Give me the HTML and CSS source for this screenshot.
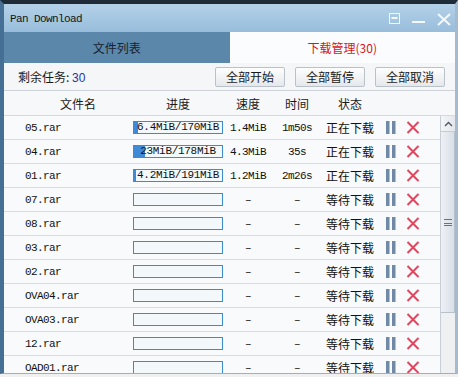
FILE: index.html
```html
<!DOCTYPE html>
<html lang="zh">
<head>
<meta charset="utf-8">
<title>Pan Download</title>
<link rel="stylesheet" href="styles.css">
</head>
<body>
<div class="window">
  <div class="titlebar">
    <span class="title">Pan Download</span>
    <div class="controls">
      <svg class="ctl-menu" width="11" height="11" viewBox="0 0 11 11"><rect x="0.5" y="0.5" width="10" height="10" fill="none" stroke="#f4f8fc" stroke-width="1"/><rect x="2.5" y="4" width="6" height="2" fill="#f4f8fc"/></svg>
      <svg class="ctl-min" width="13" height="12" viewBox="0 0 13 12"><rect x="0" y="8" width="13" height="2" fill="#f4f8fc"/></svg>
      <svg class="ctl-close" width="14" height="13" viewBox="0 0 14 13"><path d="M1 1 L13 12 M13 1 L1 12" stroke="#f4f8fc" stroke-width="2"/></svg>
    </div>
  </div>
  <div class="tabs">
    <div class="tab">文件列表</div>
    <div class="tab active">下载管理(30)</div>
  </div>
  <div class="toolbar">
    <span class="remain">剩余任务: <span class="num">30</span></span>
    <div class="btns">
      <button class="btn">全部开始</button>
      <button class="btn">全部暂停</button>
      <button class="btn">全部取消</button>
    </div>
  </div>
  <div class="thead">
    <div class="th th-name">文件名</div>
    <div class="th">进度</div>
    <div class="th">速度</div>
    <div class="th">时间</div>
    <div class="th">状态</div>
    <div class="th"></div>
  </div>
  <div class="list">
    <div class="rows">
      <div class="row"><div class="name">05.rar</div><div class="prog"><div class="bar"><div class="fill" style="width:4%"></div><span class="ptext">6.4MiB/170MiB</span></div></div><div class="c mono">1.4MiB</div><div class="c mono">1m50s</div><div class="c st">正在下载</div><div class="acts"><svg width="10" height="13" viewBox="0 0 10 13"><rect x="0" y="0" width="3.5" height="13" fill="#6f89a6"/><rect x="6" y="0" width="3.5" height="13" fill="#6f89a6"/></svg><svg width="14" height="13" viewBox="0 0 14 13"><path d="M1.5 1 L12.5 12 M12.5 1 L1.5 12" stroke="#e2465e" stroke-width="2"/></svg></div></div>
      <div class="row"><div class="name">04.rar</div><div class="prog"><div class="bar"><div class="fill" style="width:13%"></div><span class="ptext">23MiB/178MiB</span></div></div><div class="c mono">4.3MiB</div><div class="c mono">35s</div><div class="c st">正在下载</div><div class="acts"><svg width="10" height="13" viewBox="0 0 10 13"><rect x="0" y="0" width="3.5" height="13" fill="#6f89a6"/><rect x="6" y="0" width="3.5" height="13" fill="#6f89a6"/></svg><svg width="14" height="13" viewBox="0 0 14 13"><path d="M1.5 1 L12.5 12 M12.5 1 L1.5 12" stroke="#e2465e" stroke-width="2"/></svg></div></div>
      <div class="row"><div class="name">01.rar</div><div class="prog"><div class="bar"><div class="fill" style="width:2%"></div><span class="ptext">4.2MiB/191MiB</span></div></div><div class="c mono">1.2MiB</div><div class="c mono">2m26s</div><div class="c st">正在下载</div><div class="acts"><svg width="10" height="13" viewBox="0 0 10 13"><rect x="0" y="0" width="3.5" height="13" fill="#6f89a6"/><rect x="6" y="0" width="3.5" height="13" fill="#6f89a6"/></svg><svg width="14" height="13" viewBox="0 0 14 13"><path d="M1.5 1 L12.5 12 M12.5 1 L1.5 12" stroke="#e2465e" stroke-width="2"/></svg></div></div>
      <div class="row"><div class="name">07.rar</div><div class="prog"><div class="bar"></div></div><div class="c mono">–</div><div class="c mono">–</div><div class="c st">等待下载</div><div class="acts"><svg width="10" height="13" viewBox="0 0 10 13"><rect x="0" y="0" width="3.5" height="13" fill="#6f89a6"/><rect x="6" y="0" width="3.5" height="13" fill="#6f89a6"/></svg><svg width="14" height="13" viewBox="0 0 14 13"><path d="M1.5 1 L12.5 12 M12.5 1 L1.5 12" stroke="#e2465e" stroke-width="2"/></svg></div></div>
      <div class="row"><div class="name">08.rar</div><div class="prog"><div class="bar"></div></div><div class="c mono">–</div><div class="c mono">–</div><div class="c st">等待下载</div><div class="acts"><svg width="10" height="13" viewBox="0 0 10 13"><rect x="0" y="0" width="3.5" height="13" fill="#6f89a6"/><rect x="6" y="0" width="3.5" height="13" fill="#6f89a6"/></svg><svg width="14" height="13" viewBox="0 0 14 13"><path d="M1.5 1 L12.5 12 M12.5 1 L1.5 12" stroke="#e2465e" stroke-width="2"/></svg></div></div>
      <div class="row"><div class="name">03.rar</div><div class="prog"><div class="bar"></div></div><div class="c mono">–</div><div class="c mono">–</div><div class="c st">等待下载</div><div class="acts"><svg width="10" height="13" viewBox="0 0 10 13"><rect x="0" y="0" width="3.5" height="13" fill="#6f89a6"/><rect x="6" y="0" width="3.5" height="13" fill="#6f89a6"/></svg><svg width="14" height="13" viewBox="0 0 14 13"><path d="M1.5 1 L12.5 12 M12.5 1 L1.5 12" stroke="#e2465e" stroke-width="2"/></svg></div></div>
      <div class="row"><div class="name">02.rar</div><div class="prog"><div class="bar"></div></div><div class="c mono">–</div><div class="c mono">–</div><div class="c st">等待下载</div><div class="acts"><svg width="10" height="13" viewBox="0 0 10 13"><rect x="0" y="0" width="3.5" height="13" fill="#6f89a6"/><rect x="6" y="0" width="3.5" height="13" fill="#6f89a6"/></svg><svg width="14" height="13" viewBox="0 0 14 13"><path d="M1.5 1 L12.5 12 M12.5 1 L1.5 12" stroke="#e2465e" stroke-width="2"/></svg></div></div>
      <div class="row"><div class="name">OVA04.rar</div><div class="prog"><div class="bar"></div></div><div class="c mono">–</div><div class="c mono">–</div><div class="c st">等待下载</div><div class="acts"><svg width="10" height="13" viewBox="0 0 10 13"><rect x="0" y="0" width="3.5" height="13" fill="#6f89a6"/><rect x="6" y="0" width="3.5" height="13" fill="#6f89a6"/></svg><svg width="14" height="13" viewBox="0 0 14 13"><path d="M1.5 1 L12.5 12 M12.5 1 L1.5 12" stroke="#e2465e" stroke-width="2"/></svg></div></div>
      <div class="row"><div class="name">OVA03.rar</div><div class="prog"><div class="bar"></div></div><div class="c mono">–</div><div class="c mono">–</div><div class="c st">等待下载</div><div class="acts"><svg width="10" height="13" viewBox="0 0 10 13"><rect x="0" y="0" width="3.5" height="13" fill="#6f89a6"/><rect x="6" y="0" width="3.5" height="13" fill="#6f89a6"/></svg><svg width="14" height="13" viewBox="0 0 14 13"><path d="M1.5 1 L12.5 12 M12.5 1 L1.5 12" stroke="#e2465e" stroke-width="2"/></svg></div></div>
      <div class="row"><div class="name">12.rar</div><div class="prog"><div class="bar"></div></div><div class="c mono">–</div><div class="c mono">–</div><div class="c st">等待下载</div><div class="acts"><svg width="10" height="13" viewBox="0 0 10 13"><rect x="0" y="0" width="3.5" height="13" fill="#6f89a6"/><rect x="6" y="0" width="3.5" height="13" fill="#6f89a6"/></svg><svg width="14" height="13" viewBox="0 0 14 13"><path d="M1.5 1 L12.5 12 M12.5 1 L1.5 12" stroke="#e2465e" stroke-width="2"/></svg></div></div>
      <div class="row"><div class="name">OAD01.rar</div><div class="prog"><div class="bar"></div></div><div class="c mono">–</div><div class="c mono">–</div><div class="c st">等待下载</div><div class="acts"><svg width="10" height="13" viewBox="0 0 10 13"><rect x="0" y="0" width="3.5" height="13" fill="#6f89a6"/><rect x="6" y="0" width="3.5" height="13" fill="#6f89a6"/></svg><svg width="14" height="13" viewBox="0 0 14 13"><path d="M1.5 1 L12.5 12 M12.5 1 L1.5 12" stroke="#e2465e" stroke-width="2"/></svg></div></div>
    </div>
    <div class="scrollbar">
      <div class="sb-up"><svg width="9" height="6" viewBox="0 0 9 6"><path d="M1 5 L4.5 1.5 L8 5" fill="none" stroke="#4a5560" stroke-width="1.3"/></svg></div>
      <div class="sb-thumb"><span class="grip"></span></div>
      <div class="sb-track"></div>
    </div>
  </div>
</div>
</body>
</html>
```
FILE: styles.css
```css
* { box-sizing: border-box; }
html, body { margin: 0; padding: 0; }
body {
  width: 458px;
  height: 377px;
  background: #f0f0f0;
  overflow: hidden;
  font-family: "Noto Sans CJK SC", "Noto Sans", sans-serif;
  font-size: 12px;
  color: #1a1a1a;
}
.window {
  width: 458px;
  height: 374px;
  border-top: 4px solid #1f2b36;
  border-left: 4px solid #466f96;
  border-right: 3px solid #a7bacb;
  border-bottom: 1px solid #a5adb5;
  display: flex;
  flex-direction: column;
  overflow: hidden;
  background: #f8fafb;
}
.titlebar {
  height: 28px;
  flex: none;
  background: linear-gradient(#b4d1e8, #98bddb);
  display: flex;
  align-items: center;
  justify-content: space-between;
  padding-left: 6px;
  padding-right: 4px;
}
.title {
  font-family: "Liberation Mono", monospace;
  font-size: 11px;
  letter-spacing: -0.6px;
  color: #141414;
  padding-top: 2px;
}
.controls {
  display: flex;
  align-items: center;
  gap: 0;
  padding-top: 2px;
}
.ctl-menu { margin-right: 12px; margin-top: -1px; }
.ctl-min { margin-right: 12px; }
.tabs {
  height: 31px;
  flex: none;
  display: flex;
}
.tab {
  flex: 1;
  display: flex;
  align-items: center;
  justify-content: center;
  background: #5b87aa;
  color: #17222e;
  font-size: 12px;
}
.tab.active {
  background: #fbfcfd;
  color: #d4161c;
}
.toolbar {
  height: 28px;
  flex: none;
  display: flex;
  align-items: center;
  justify-content: space-between;
  padding-left: 14px;
  padding-right: 10px;
  background: #f4f6f8;
  border-bottom: 1px solid #cdd3d9;
}
.remain { font-size: 12px; color: #1a1a1a; }
.num { font-family: "Liberation Sans", sans-serif; color: #2634a0; }
.btns { display: flex; gap: 10px; }
.btn {
  width: 70px;
  height: 20px;
  padding: 0;
  font-family: "Noto Sans CJK SC", sans-serif;
  font-size: 12px;
  color: #1a1a1a;
  background: linear-gradient(#fefefe, #e5e8eb);
  border: 1px solid #b9c1c9;
  border-radius: 2px;
  line-height: 18px;
}
.thead {
  height: 25px;
  flex: none;
  display: grid;
  grid-template-columns: 129px 91px 48px 50px 56px 1fr;
  align-items: center;
  background: #f6f8fa;
  border-bottom: 1px solid #d3d9df;
}
.th { text-align: center; font-size: 12px; color: #1a1a1a; }
.th:nth-child(2) { text-align: left; padding-left: 33px; }
.th-name { padding-left: 19px; }
.list {
  flex: 1;
  display: flex;
  min-height: 0;
}
.rows {
  width: 436px;
  flex: none;
}
.row {
  height: 24px;
  display: grid;
  grid-template-columns: 129px 91px 48px 50px 56px 62px;
  align-items: center;
  border-bottom: 1px solid #d6dbe0;
  background: #f9fafb;
}
.name {
  padding-left: 21px;
  font-family: "Liberation Mono", monospace;
  font-size: 11px;
  letter-spacing: -0.6px;
  color: #111;
}
.bar {
  position: relative;
  width: 90px;
  height: 13px;
  border: 1px solid #3a8ccb;
  background: #f3f8fb;
  display: flex;
  align-items: center;
  justify-content: center;
}
.fill {
  position: absolute;
  left: 0;
  top: 0;
  bottom: 0;
  background: #3f8ad6;
}
.ptext {
  position: relative;
  font-family: "Liberation Mono", monospace;
  font-size: 11px;
  letter-spacing: -0.3px;
  line-height: 11px;
  color: #111;
}
.c { text-align: center; }
.mono {
  font-family: "Liberation Mono", monospace;
  font-size: 11px;
  letter-spacing: -0.6px;
  color: #111;
}
.st { font-size: 12px; color: #111; }
.acts {
  display: flex;
  align-items: center;
  padding-left: 8px;
  gap: 10px;
}
.scrollbar {
  width: 15px;
  flex: none;
  display: flex;
  flex-direction: column;
  border-left: 1px solid #c7ced6;
  background: #eceff2;
}
.sb-up {
  height: 16px;
  flex: none;
  display: flex;
  align-items: center;
  justify-content: center;
  background: linear-gradient(90deg, #f4f6f8, #e3e7ec);
  border-bottom: 1px solid #c3cad2;
}
.sb-thumb {
  height: 181px;
  flex: none;
  background: linear-gradient(90deg, #eef1f5, #d9dfe7);
  border-right: 1px solid #b7c1cc;
  border-bottom: 1px solid #b7c1cc;
  display: flex;
  align-items: center;
  justify-content: center;
}
.grip {
  width: 8px;
  height: 7px;
  border-top: 1px solid #6a737c;
  border-bottom: 1px solid #6a737c;
  background: linear-gradient(#0000 3px, #6a737c 3px, #6a737c 4px, #0000 4px);
}
.sb-track {
  flex: 1;
  background: #eef0f2;
}
```
